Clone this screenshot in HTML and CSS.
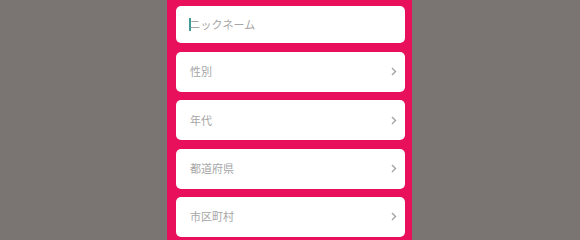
FILE: index.html
```html
<!DOCTYPE html>
<html lang="ja">
<head>
<meta charset="utf-8">
<link rel="stylesheet" href="styles.css">
</head>
<body>
<div class="page">
  <div class="panel">
    <div class="field field-input">
      <span class="caret"></span><span class="placeholder">ニックネーム</span>
    </div>
    <div class="field">
      <span class="placeholder">性別</span>
      <svg class="chev" width="6" height="9" viewBox="0 0 6 9"><path d="M1 1 L4.5 4.5 L1 8" fill="none" stroke="#a3a3a3" stroke-width="1.4"/></svg>
    </div>
    <div class="field">
      <span class="placeholder">年代</span>
      <svg class="chev" width="6" height="9" viewBox="0 0 6 9"><path d="M1 1 L4.5 4.5 L1 8" fill="none" stroke="#a3a3a3" stroke-width="1.4"/></svg>
    </div>
    <div class="field">
      <span class="placeholder">都道府県</span>
      <svg class="chev" width="6" height="9" viewBox="0 0 6 9"><path d="M1 1 L4.5 4.5 L1 8" fill="none" stroke="#a3a3a3" stroke-width="1.4"/></svg>
    </div>
    <div class="field">
      <span class="placeholder">市区町村</span>
      <svg class="chev" width="6" height="9" viewBox="0 0 6 9"><path d="M1 1 L4.5 4.5 L1 8" fill="none" stroke="#a3a3a3" stroke-width="1.4"/></svg>
    </div>
  </div>
</div>
</body>
</html>
```
FILE: styles.css
```css
html, body {
  margin: 0;
  padding: 0;
  height: 100%;
  overflow: hidden;
}
body {
  background: #7a7473;
  font-family: "Noto Sans CJK JP", "Noto Sans", sans-serif;
}
.page {
  display: flex;
  justify-content: flex-start;
  height: 100%;
}
.panel {
  margin-left: 167px;
  width: 245px;
  box-sizing: border-box;
  padding: 6px 7px 0 9px;
  background: #e8105a;
  height: 100%;
  display: flex;
  flex-direction: column;
  gap: 8.35px;
}
.field {
  background: #ffffff;
  border-radius: 5px;
  height: 40px;
  flex: none;
  display: flex;
  align-items: center;
  justify-content: space-between;
  padding: 0 8px 0 14px;
  box-sizing: border-box;
}
.field-input {
  height: 37px;
  margin-bottom: 0.6px;
  justify-content: flex-start;
  padding-left: 13px;
}
.placeholder {
  font-size: 11px;
  color: #a6a6a6;
  line-height: 1;
}
.caret {
  display: inline-block;
  width: 1.5px;
  height: 13px;
  background: #3f9c94;
  margin-right: -1px;
}
.chev {
  display: block;
}
```
